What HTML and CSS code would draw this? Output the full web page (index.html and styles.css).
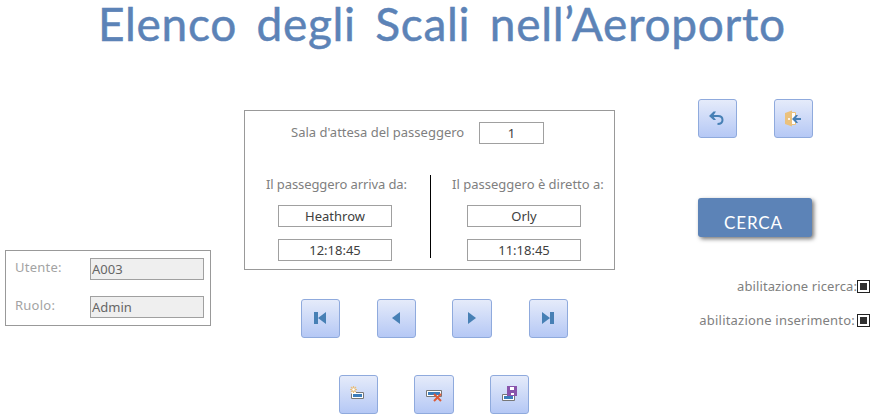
FILE: index.html
```html
<!DOCTYPE html>
<html lang="it">
<head>
<meta charset="utf-8">
<title>Elenco degli Scali nell'Aeroporto</title>
<link rel="stylesheet" href="styles.css">
</head>
<body>
<h1><span>Elenco degli Scali nell’Aeroporto</span></h1>
<main>
  <section class="panel user">
    <div class="user-row"><label><span class="t-ut">Utente:</span></label><div class="field off"><span>A003</span></div></div>
    <div class="user-row"><label><span class="t-ut">Ruolo:</span></label><div class="field off"><span>Admin</span></div></div>
  </section>

  <div class="center">
    <section class="panel stop">
      <div class="hall"><label><span>Sala d'attesa del passeggero</span></label><div class="field small"><span>1</span></div></div>
      <div class="routes">
        <div class="route from">
          <label><span class="t-from">Il passeggero arriva da:</span></label>
          <div class="field"><span>Heathrow</span></div>
          <div class="field"><span>12:18:45</span></div>
        </div>
        <div class="divider"></div>
        <div class="route to">
          <label><span>Il passeggero è diretto a:</span></label>
          <div class="field"><span>Orly</span></div>
          <div class="field"><span>11:18:45</span></div>
        </div>
      </div>
    </section>
    <nav class="buttons move">
      <button aria-label="Primo"><svg width="39" height="39" viewBox="0 0 39 39"><path fill="#4780b5" d="M13 13h4v12h-4zM25 13v12l-8-6z"/></svg></button>
      <button aria-label="Precedente"><svg width="39" height="39" viewBox="0 0 39 39"><path fill="#4780b5" d="M23 13v12l-8-6z"/></svg></button>
      <button class="wide" aria-label="Successivo"><svg width="39" height="39" viewBox="0 0 39 39"><path fill="#4780b5" d="M16 13v12l8-6z"/></svg></button>
      <button aria-label="Ultimo"><svg width="39" height="39" viewBox="0 0 39 39"><path fill="#4780b5" d="M13 13v12l8-6zM21 13h4v12h-4z"/></svg></button>
    </nav>
    <nav class="buttons edit">
      <button aria-label="Nuovo"><svg width="39" height="39" viewBox="0 0 39 39"><path fill="#fff" d="M12 17h13v7H12z"/><path fill="none" stroke="#777" d="M17 17.500h7.500v6h-12v-5"/><path fill="#3c7dbb" d="M14 19h9v3h-9z"/><path stroke="#e9bf7d" stroke-width="1.200" d="M14.500 11v7M11 14.500h7M12 12l5 5M17 12l-5 5"/><circle cx="14.500" cy="14.500" r="1.200" fill="#fff"/></svg></button>
      <button class="wide" aria-label="Elimina"><svg width="39" height="39" viewBox="0 0 39 39"><path fill="#fff" stroke="#777" d="M12.500 15.500h15v6h-15z"/><path fill="#3c7dbb" d="M14 17h12v3H14z"/><path stroke="#dc5a38" stroke-width="2" d="m20 19 7 7m0-7-7 7"/></svg></button>
      <button aria-label="Salva"><svg width="39" height="39" viewBox="0 0 39 39"><path fill="#fff" stroke="#777" d="M12.500 19.500h12v6h-12z"/><path fill="#3c7dbb" d="M14 21h9v3h-9z"/><path fill="#8953ab" d="M17 11h10v10H17z"/><path fill="#fff" d="M20 12h4v3h-4zM21 18h3v2h-3z"/></svg></button>
    </nav>
  </div>

  <aside>
    <div class="buttons tools">
      <button aria-label="Annulla"><svg width="39" height="39" viewBox="0 0 39 39"><path fill="none" stroke="#4780b5" stroke-width="2" d="M13 17h7c3 0 4.500 1.500 4.500 4 0 2.500-2 4-5 4"/><path fill="#4780b5" d="m11 17 4.500-4.500h2.500L15 17l3 4h-2.500z"/></svg></button>
      <button aria-label="Esci"><svg width="39" height="39" viewBox="0 0 39 39"><path fill="#fff" stroke="#ebc17c" d="M17 13.500h4.500v12H17z"/><path fill="#ebc17c" d="m11 14 7-2.500v16L11 25z"/><circle cx="15" cy="20" r="1.100" fill="#fff"/><path fill="#4780b5" d="m18 20 4-4h2l-2 3h5v2h-5l2 3h-2z"/></svg></button>
    </div>
    <button class="search"><span>CERCA</span></button>
    <div class="check first"><label><span class="t-ric">abilitazione ricerca:</span></label><i></i></div>
    <div class="check"><label><span class="t-ins">abilitazione inserimento:</span></label><i></i></div>
  </aside>
</main>
</body>
</html>
```
FILE: styles.css
```css
* { box-sizing: border-box; }
body { margin: 0; width: 882px; height: 418px; overflow: hidden; background: #fff; color: #404040; font: 13px/20px "Noto Sans", sans-serif; }
span { white-space: nowrap; }
svg { display: block; }
h1 { margin: 0; height: 52px; padding-left: 98px; color: #5c83b7; font: 400 46px/48px Lato, sans-serif; letter-spacing: 0.7px; word-spacing: 7px; -webkit-text-stroke: 0.5px #5c83b7; }
main { display: grid; grid-template-columns: 206px 371px 172px; column-gap: 33px; padding: 47px 0 0 5px; align-items: start; }
.panel { border: 1px solid #999; }
.user { height: 76px; margin-top: 151px; padding: 7px 6px 0 9px; }
.user-row { display: flex; justify-content: space-between; height: 38px; }
.user-row label { color: #a3a3a3; line-height: 19px; }
.t-ut { letter-spacing: 0.25px; }
.t-from { letter-spacing: -0.1px; }
.t-ric { letter-spacing: 0.1px; }
.t-ins { letter-spacing: 0.2px; }
.field { width: 114px; height: 22px; border: 1px solid #a0a0a0; text-align: center; line-height: 20px; }
.off { background: #efefef; color: #666; text-align: left; padding-left: 1px; }
label { color: #808080; }
.stop { height: 160px; margin-top: 11px; }
.hall { display: flex; justify-content: space-between; padding: 11px 70px 0 46px; }
.small { width: 65px; }
.routes { display: grid; grid-template-columns: 185px 1px 1fr; margin-top: 31px; }
.route { display: flex; flex-direction: column; gap: 12px; }
.route label { height: 18px; line-height: 18px; }
.from { padding-left: 21px; }
.to { padding-left: 21px; }
.route .field { margin-left: 12px; }
.to .field { margin-left: 15px; }
.divider { height: 83px; background: #000; }
.buttons { display: flex; }
button { width: 39px; height: 39px; padding: 0; border: 1px solid #8faadd; border-radius: 3px; background: linear-gradient(#e5ebfa, #b5c8f5); }
.buttons svg { margin: -1px; }
.wide { width: 40px; }
.move { gap: 36.500px; margin: 29px 0 0 57px; }
.edit { gap: 36px; margin: 37px 0 0 95px; }
aside { margin-left: 50px; width: 172px; }
.tools { gap: 37px; }
.search { display: block; width: 114px; height: 39px; margin-top: 60px; padding: 10px 3px 0 0; border: 0; border-radius: 3px; background: #5c83b7; box-shadow: 2px 2px 4px #777; color: #fff; font: 17px/20px Lato, sans-serif; letter-spacing: 0.9px; }
.check { display: flex; justify-content: flex-end; align-items: center; height: 20px; margin-top: 14px; }
.first { margin-top: 39px; }
.check:not(.first) label { margin-right: 2px; }
.check i { width: 13px; height: 13px; border: 1px solid #222; background: linear-gradient(#303030, #303030) center / 7px 7px no-repeat; flex: none; }
```
